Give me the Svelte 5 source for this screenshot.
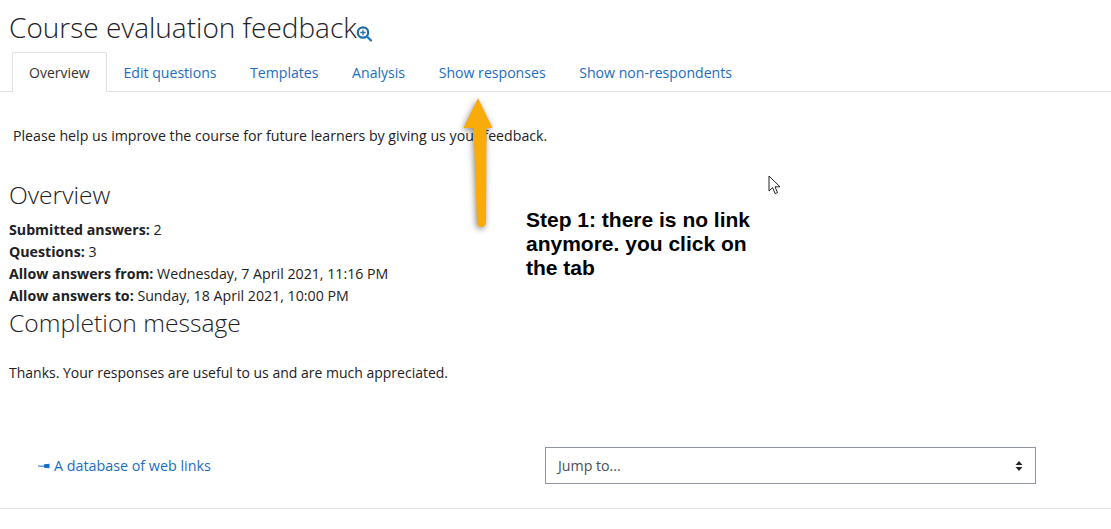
<script>
  const tabs = ['Overview', 'Edit questions', 'Templates', 'Analysis', 'Show responses', 'Show non-respondents'];
  const facts = [
    ['Submitted answers:', '2'],
    ['Questions:', '3'],
    ['Allow answers from:', 'Wednesday, 7 April 2021, 11:16 PM'],
    ['Allow answers to:', 'Sunday, 18 April 2021, 10:00 PM']
  ];
</script>

<div class="page">
  <h1 class="title">Course evaluation feedback<svg class="help" width="16" height="17" viewBox="0 0 16 17"><circle cx="7" cy="7.5" r="5.2" fill="none" stroke="#1c6ea4" stroke-width="2.2"/><path d="M11 11.5l4 4" stroke="#1f78cc" stroke-width="2.4" stroke-linecap="round"/><path d="M7 4.8v5.4M4.3 7.5h5.4" stroke="#2a6f9e" stroke-width="1.3"/></svg></h1>

  <nav class="tabs">
    {#each tabs as tab, i}
      <a href="#top" class="tab" class:active={i === 0}>{tab}</a>
    {/each}
  </nav>

  <p class="intro">Please help us improve the course for future learners by giving us your feedback.</p>

  <h2 class="overview">Overview</h2>
  <div class="facts">
    {#each facts as [label, value]}
      <div><b>{label}</b> {value}</div>
    {/each}
  </div>
  <h2 class="completion">Completion message</h2>
  <p class="thanks">Thanks. Your responses are useful to us and are much appreciated.</p>

  <div class="footer-nav">
    <a href="#top" class="prev"><svg width="12" height="6" viewBox="0 0 12 6"><path d="M0 2.6h6V3.6H0z" fill="#1a6dc4"/><path d="M6 1.2L11.5 .8V5.2L6 4.8z" fill="#1a6dc4"/></svg>A database of web links</a>
    <div class="jump">
      <span>Jump to...</span>
      <svg width="8" height="12" viewBox="0 0 8 12"><path d="M4 1l3.5 4h-7zM4 11L.5 7h7z" fill="#212529"/></svg>
    </div>
  </div>
  <div class="rule"></div>

  <svg class="arrow" width="50" height="140" viewBox="0 0 50 140">
    <path d="M23 3L37.500 33H31.500L31 127.500a4.500 4.500 0 0 1-9 0L18.500 33H8.500z" fill="#f9ab0a"/>
  </svg>
  <div class="note">Step 1: there is no link anymore. you click on the tab</div>
  <svg class="cursor" width="14" height="20" viewBox="0 0 14 20"><path d="M1 1v15l3.600-3.400 2.500 6 2.400-1-2.500-5.800h5z" fill="#fff" stroke="#222" stroke-width="1"/></svg>
</div>

<style>
  :global(body) {
    margin: 0;
    background: #fff;
  }

  .page {
    position: relative;
    width: 1111px;
    height: 529px;
    overflow: hidden;
    font-family: "Open Sans", "Liberation Sans", sans-serif;
    font-size: 14.2px;
    color: #1d2125;
  }

  .title {
    margin: 0;
    padding: 10px 0 0 9px;
    height: 41px;
    box-sizing: border-box;
    font-size: 28px;
    font-weight: 300;
    line-height: 34px;
    color: #1d2125;
    white-space: nowrap;
  }

  .help {
    margin-left: -1px;
    vertical-align: -4px;
  }

  .tabs {
    display: flex;
    margin-top: 11px;
    padding-left: 12px;
    height: 40px;
    box-sizing: border-box;
    border-bottom: 1px solid #dee2e6;
    font-size: 14.1px;
  }

  .tab {
    padding: 0 16.8px;
    height: 40px;
    box-sizing: border-box;
    line-height: 41px;
    color: #1a6dc4;
    text-decoration: none;
    white-space: nowrap;
  }

  .tab.active {
    color: #333;
    background: #fff;
    border: 1px solid #dee2e6;
    border-bottom-color: #fff;
    border-radius: 2px 2px 0 0;
    padding: 0 16px;
    line-height: 39px;
    font-size: 14px;
  }

  .intro {
    margin: 34px 0 0 13px;
    line-height: 20px;
  }

  h2 {
    margin: 0 0 0 9px;
    font-size: 24.6px;
    font-weight: 300;
    line-height: 28px;
    color: #1d2125;
  }

  .overview {
    margin-top: 35px;
  }

  .completion {
    margin-top: 2px;
  }

  .facts {
    margin: 10px 0 0 9px;
    line-height: 22px;
  }

  .thanks {
    margin: 26px 0 0 9px;
    line-height: 20px;
    font-size: 14px;
  }

  .footer-nav {
    display: flex;
    align-items: center;
    justify-content: space-between;
    margin-top: 64px;
    padding: 0 75px 0 38px;
  }

  .prev {
    display: flex;
    align-items: center;
    gap: 4px;
    color: #1a6dc4;
    text-decoration: none;
    font-size: 14.3px;
  }

  .jump {
    display: flex;
    align-items: center;
    justify-content: space-between;
    width: 491px;
    height: 37px;
    box-sizing: border-box;
    padding: 0 12px;
    border: 1px solid #8f959e;
    color: #495057;
  }

  .rule {
    margin-top: 24px;
    border-top: 1px solid #dee2e6;
  }

  .arrow {
    position: absolute;
    left: 455px;
    top: 95px;
    filter: drop-shadow(-1px 2px 3px rgba(0, 0, 0, 0.45));
  }

  .note {
    position: absolute;
    left: 526px;
    top: 208px;
    width: 240px;
    font-family: "Liberation Sans", Arial, sans-serif;
    font-size: 21px;
    font-weight: 700;
    line-height: 24px;
    color: #000;
  }

  .cursor {
    position: absolute;
    left: 768px;
    top: 175px;
  }
</style>
